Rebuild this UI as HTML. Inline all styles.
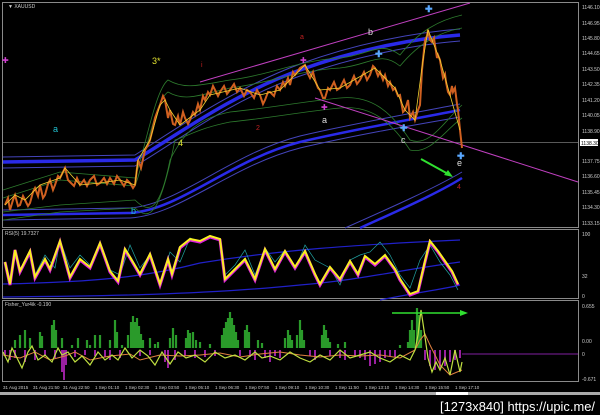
<!DOCTYPE html>
<html><head><meta charset="utf-8"><style>
html,body{margin:0;padding:0;background:#000;width:600px;height:415px;overflow:hidden}
svg{display:block}
text{font-family:"Liberation Sans",sans-serif}
</style></head><body>
<svg width="600" height="415" viewBox="0 0 600 415" xmlns="http://www.w3.org/2000/svg">
<rect width="600" height="415" fill="#000"/>
<g stroke="#8a8a8a" stroke-width="1" fill="none">
<rect x="2.5" y="2.5" width="576" height="225"/>
<rect x="2.5" y="229.5" width="576" height="69"/>
<rect x="2.5" y="300.5" width="576" height="81"/>
</g>
<text x="8" y="8" fill="#ccc" font-size="5">▼ XAUUSD</text>
<g fill="#ccc" font-size="5">
<text x="582" y="9">1146.10</text><text x="582" y="25">1146.95</text><text x="582" y="40">1145.80</text>
<text x="582" y="55">1144.65</text><text x="582" y="71">1143.50</text><text x="582" y="86">1142.35</text>
<text x="582" y="102">1141.20</text><text x="582" y="117">1140.05</text><text x="582" y="133">1138.90</text>
<text x="582" y="163">1137.75</text><text x="582" y="178">1136.60</text><text x="582" y="194">1135.45</text>
<text x="582" y="209">1134.30</text><text x="582" y="225">1133.15</text>
</g>
<rect x="580" y="139" width="18" height="7" fill="#fff"/>
<text x="581" y="145" fill="#000" font-size="5">1138.30</text>
<line x1="3" y1="142.5" x2="578" y2="142.5" stroke="#777" stroke-width="0.8"/>
<g fill="none" stroke="#2a2ae8">
<path d="M3,162 L135,160 C170,140 230,95 300,70 C360,48 420,38 460,35" stroke-width="3.5"/>
<path d="M3,168 L135,166 C170,146 230,100 300,76 C360,55 420,44 460,41" stroke-width="1" stroke="#4444bb"/>
<path d="M3,157 L135,155 C170,133 230,90 300,64 C360,42 420,32 460,29" stroke-width="1" stroke="#4444bb"/>
<path d="M3,215 L130,213 C180,210 230,160 300,142 C360,128 420,118 460,110" stroke-width="2.5"/>
<path d="M3,220 L130,218 C180,215 230,166 300,148 C360,134 420,124 460,117" stroke-width="1" stroke="#4444bb"/>
<path d="M3,210 L130,208 C180,204 230,154 300,136 C360,122 420,112 460,104" stroke-width="1" stroke="#4444bb"/>
<path d="M360,228 C400,210 440,192 462,178" stroke-width="2.5"/>
<path d="M345,228 C390,208 435,188 462,172" stroke-width="1" stroke="#4444bb"/>
</g>
<g fill="none" stroke="#2d7a2d" stroke-width="0.8">
<path d="M3,190 L60,172 L135,178 C145,150 155,90 168,80 C185,90 200,85 230,80 C270,75 300,60 340,58 C370,55 380,40 400,55 C420,30 440,20 462,15"/>
<path d="M3,198 L60,180 L135,186 C145,160 155,100 168,92 C185,102 200,95 230,88 C270,83 300,70 340,68 C370,65 380,50 400,66 C420,42 440,32 462,28"/>
<path d="M3,212 L60,205 L135,200 C150,215 160,210 170,160 C185,130 200,118 230,112 C270,108 300,102 340,98 C370,95 390,110 410,140 C430,148 445,120 462,105"/>
<path d="M3,220 L60,212 L135,208 C150,222 160,215 175,140 C190,135 200,128 230,122 C270,118 300,112 340,108 C370,105 390,120 410,150 C430,155 445,130 462,118"/>
</g>
<g stroke="#c040c0" stroke-width="1" fill="none">
<line x1="200" y1="82" x2="470" y2="3"/>
<line x1="315" y1="98" x2="578" y2="182"/>
</g>
<polyline fill="none" stroke="#d06020" stroke-width="2" points="5,205 8,198 10,210 13,200 15,195 18,206 20,205 23,196 25,200 28,206 30,203 33,192 35,188 38,196 40,185 43,198 45,195 48,184 50,180 53,190 55,185 58,176 60,178 63,172 65,168 68,180 70,182 74,186 77,178 80,185 84,180 87,186 90,180 94,176 97,185 100,183 104,178 107,184 110,178 114,184 117,176 120,180 124,186 127,180 130,183 133,188 135,185 138,160 141,168 145,150 148,145 150,140 153,128 155,118 158,110 160,105 163,96 165,100 168,118 170,110 173,124 175,125 178,116 180,125 183,112 185,118 188,124 190,120 193,112 195,115 198,104 200,110 203,96 205,100 208,92 210,95 213,86 215,90 218,96 220,92 224,86 227,94 230,90 234,84 237,92 240,88 244,96 247,90 250,92 254,98 257,90 260,95 263,104 265,100 268,92 270,92 274,96 277,86 280,90 283,82 285,86 288,78 290,85 293,72 295,75 300,68 305,65 308,74 310,78 313,72 315,80 318,88 320,90 323,98 325,98 328,88 330,90 334,82 337,90 340,88 344,80 347,88 350,85 354,76 357,84 360,80 364,72 367,80 370,75 373,66 375,68 378,76 380,72 383,80 385,75 388,86 390,82 393,90 395,88 398,96 400,95 403,112 405,110 408,100 410,118 413,112 415,120 418,110 420,105 422,70 423,60 425,40 427,36 428,30 430,40 432,42 434,38 435,45 437,58 438,55 440,60 442,72 443,78 445,74 446,82 448,92 450,95 452,86 453,92 455,88 457,104 458,110 460,130 462,148"/>
<polyline fill="none" stroke="#f0d030" stroke-width="0.8" points="5,205 15,195 25,200 40,185 60,178 65,168 80,185 100,183 120,180 135,185 138,160 150,140 160,105 165,100 170,110 180,125 200,110 210,95 240,88 260,95 280,90 305,65 320,90 340,88 375,68 395,88 405,110 415,120 423,60 428,30 440,60 450,95 460,130"/>
<g fill="#5aa8ff" font-size="9" font-weight="bold">
<text x="425" y="12">✚</text><text x="375" y="57">✚</text><text x="400" y="131">✚</text><text x="457" y="159">✚</text>
</g>
<g fill="#d040d0" font-size="8"><text x="2" y="63">✚</text><text x="300" y="63">✚</text><text x="321" y="110">✚</text></g>
<g font-family="Liberation Serif,serif" font-size="9">
<text x="53" y="132" fill="#20c0d0">a</text>
<text x="131" y="214" fill="#20c0d0">b</text>
<text x="152" y="64" fill="#e0e030">3*</text>
<text x="178" y="146" fill="#e0e030">4</text>
<text x="201" y="67" fill="#c02020" font-size="7">i</text>
<text x="256" y="130" fill="#c02020" font-size="7">2</text>
<text x="300" y="39" fill="#c02020" font-size="7">a</text>
<text x="368" y="35" fill="#ddd">b</text>
<text x="322" y="123" fill="#ddd">a</text>
<text x="401" y="143" fill="#ddd">c</text>
<text x="457" y="166" fill="#ddd">e</text>
<text x="457" y="189" fill="#c02020" font-size="7">4</text>
</g>
<line x1="421" y1="159" x2="450" y2="175" stroke="#30e030" stroke-width="2"/>
<polygon points="453,177 444,175 448,170" fill="#30e030"/>

<text x="5" y="235" fill="#ccc" font-size="5">RSI(5) 19.7327</text>
<g fill="#ccc" font-size="5"><text x="582" y="236">100</text><text x="582" y="278">32</text><text x="582" y="298">0</text></g>
<g fill="none" stroke="#2020c8" stroke-width="1.2">
<path d="M3,284 C100,282 150,276 200,263 C280,250 350,245 460,240"/>
<path d="M3,297 C100,296 200,295 300,285 C360,280 400,270 460,262"/>
<path d="M380,300 C420,292 450,288 460,285"/>
</g>
<polyline fill="none" stroke="#20a0a0" stroke-width="0.7" points="5,262 10,280 15,255 20,270 30,250 35,275 45,255 55,268 60,240 70,268 80,255 90,265 100,243 110,270 120,275 130,245 140,268 150,255 160,285 170,252 180,262 190,238 200,242 210,238 220,240 225,275 235,265 245,250 255,275 265,248 275,262 285,250 295,270 305,245 315,260 330,268 340,285 350,260 360,255 370,252 380,242 390,255 400,275 410,288 420,260 430,245 440,262 450,275 458,290"/>
<polyline fill="none" stroke="#e020e0" stroke-width="3" points="5,262 10,285 15,250 20,272 25,262 30,252 35,278 45,260 50,270 60,242 70,278 80,260 90,268 100,244 110,272 118,282 125,250 130,258 140,275 150,255 160,285 168,260 172,275 180,248 190,240 200,242 210,237 220,240 225,280 235,270 245,260 255,280 265,250 275,270 285,252 295,268 305,252 315,275 320,285 330,268 340,280 350,262 358,275 365,257 375,265 385,256 395,270 400,280 410,295 418,292 425,262 430,242 438,252 445,262 452,272 458,285"/>
<polyline fill="none" stroke="#f8f020" stroke-width="2" points="5,262 10,284 15,250 20,271 25,261 30,251 35,277 45,259 50,269 60,241 70,277 80,259 90,267 100,243 110,271 118,281 125,249 130,257 140,274 150,254 160,284 168,259 172,274 180,247 190,239 200,241 210,236 220,239 225,279 235,269 245,259 255,279 265,249 275,269 285,251 295,267 305,251 315,274 320,284 330,267 340,279 350,261 358,274 365,256 375,264 385,255 395,269 400,279 410,294 418,291 425,261 430,241 438,251 445,261 452,271 458,284"/>

<text x="5" y="306" fill="#ccc" font-size="5">Fisher_Yur4ik -0.190</text>
<g fill="#ccc" font-size="5"><text x="582" y="308">0.655</text><text x="582" y="343">0.00</text><text x="582" y="356">0</text><text x="582" y="381">-0.671</text></g>
<line x1="462" y1="354" x2="578" y2="354" stroke="#8020a0" stroke-width="1"/>
<g stroke="#2a9a2a" stroke-width="2.2">
<path d="M15,348V340M20,348V335M25,348V330M30,348V338M40,348V332M42,348V336M52,348V325M54,348V320M56,348V330M62,348V338M72,348V345M78,348V338M87,348V340M90,348V345M95,348V335M100,348V335M110,348V340M115,348V320M117,348V332M122,348V345M128,348V335M131,348V322M133,348V316M135,348V322M137,348V318M139,348V326M141,348V334M143,348V340M150,348V338M155,348V344M158,348V342M170,348V338M173,348V328M176,348V335M186,348V338M188,348V330M190,348V333M193,348V332M196,348V340M200,348V342M210,348V344M222,348V335M224,348V328M226,348V322M228,348V318M230,348V312M232,348V318M234,348V325M236,348V332M238,348V340M245,348V330M247,348V325M249,348V332M258,348V340M262,348V343M285,348V338M288,348V330M290,348V335M292,348V340M297,348V335M300,348V320M302,348V330M304,348V340M322,348V335M324,348V325M326,348V330M328,348V338M330,348V342M338,348V344M345,348V342M400,348V345M408,348V342M410,348V330M412,348V320M414,348V330M417,348V308M419,348V315M421,348V330"/>
</g>
<g stroke="#9a20a0" stroke-width="2">
<path d="M5,350V356M10,350V360M15,350V358M25,350V362M35,350V360M45,350V356M55,350V358M62,350V372M64,350V380M66,350V365M75,350V357M85,350V355M95,350V356M105,350V357M110,350V360M120,350V358M140,350V356M150,350V355M165,350V362M168,350V368M175,350V360M185,350V356M195,350V358M205,350V357M215,350V356M240,350V356M250,350V357M255,350V360M265,350V358M270,350V362M275,350V356M280,350V358M310,350V356M315,350V360M330,350V356M340,350V358M345,350V360M355,350V357M360,350V358M365,350V360M370,350V366M375,350V364M380,350V362M385,350V358M390,350V356M395,350V357M425,350V360M430,350V366M435,350V370M440,350V368M445,350V366M450,350V362M455,350V360M460,350V358"/>
</g>
<polyline fill="none" stroke="#e08040" stroke-width="1" points="3,355 20,358 35,352 50,360 65,356 75,352 90,360 110,356 130,354 140,360 160,355 180,356 200,355 220,353 240,357 260,354 280,352 300,355 320,357 340,355 360,356 380,355 400,358 415,350 420,340 425,334 430,345 440,365 450,375 462,370"/>
<polyline fill="none" stroke="#c0e040" stroke-width="1.2" points="3,352 8,362 12,348 18,360 22,368 28,352 32,346 38,360 45,355 52,362 58,348 62,355 68,352 75,362 82,356 90,365 98,352 105,360 112,355 118,360 125,348 132,358 140,350 148,356 155,365 162,352 170,364 178,352 186,358 195,355 205,362 215,352 225,358 235,355 245,360 255,352 262,358 270,356 280,360 290,352 300,358 310,362 320,355 330,360 340,350 350,358 360,355 370,352 380,358 390,362 400,355 410,360 415,350 418,335 421,310 424,330 428,358 432,372 436,362 440,370 445,358 450,375 455,350 460,372 462,362"/>
<line x1="392" y1="313" x2="462" y2="313" stroke="#30e030" stroke-width="1.5"/>
<polygon points="468,313 460,310 460,316" fill="#30e030"/>

<g fill="#ccc" font-size="4.5">
<text x="3" y="389">31 Aug 2015</text><text x="33" y="389">31 Aug 21:50</text><text x="63" y="389">31 Aug 22:50</text>
<text x="95" y="389">1 Sep 01:10</text><text x="125" y="389">1 Sep 02:30</text><text x="155" y="389">1 Sep 03:50</text>
<text x="185" y="389">1 Sep 05:10</text><text x="215" y="389">1 Sep 06:30</text><text x="245" y="389">1 Sep 07:50</text>
<text x="275" y="389">1 Sep 09:10</text><text x="305" y="389">1 Sep 10:30</text><text x="335" y="389">1 Sep 11:50</text>
<text x="365" y="389">1 Sep 13:10</text><text x="395" y="389">1 Sep 14:30</text><text x="425" y="389">1 Sep 15:50</text>
<text x="455" y="389">1 Sep 17:10</text>
</g>
<rect x="0" y="392" width="600" height="3" fill="#aaa"/>
<rect x="436" y="392" width="32" height="3" fill="#fff"/>
<text x="440" y="411" fill="#fff" font-size="13" textLength="155" lengthAdjust="spacingAndGlyphs">[1273x840] https://upic.me/</text>
</svg>
</body></html>
